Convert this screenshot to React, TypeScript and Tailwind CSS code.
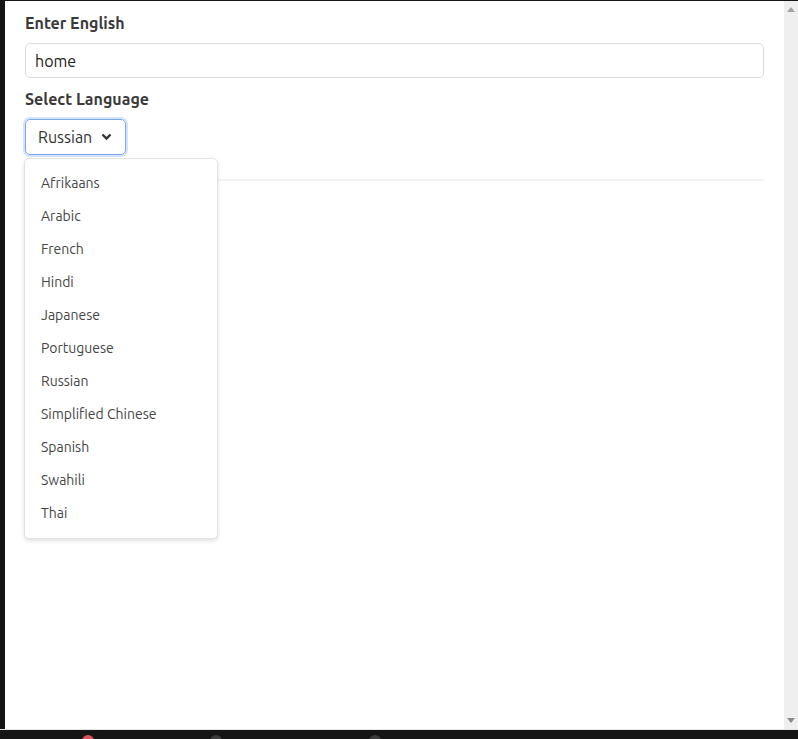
import { useState } from "react";

const languages = [
    "Afrikaans",
    "Arabic",
    "French",
    "Hindi",
    "Japanese",
    "Portuguese",
    "Russian",
    "Simplified Chinese",
    "Spanish",
    "Swahili",
    "Thai",
];

export default function App() {
    const [word, setWord] = useState("home");
    const [lang] = useState("Russian");

    return (
        <div
            className="w-[798px] h-[739px] bg-[#151515] flex flex-col overflow-hidden"
            style={{ fontFamily: "Ubuntu, 'Noto Sans', 'Open Sans', sans-serif" }}
        >
            <div className="flex flex-1 mt-px">
                <div className="w-[5px] shrink-0" />
                <main className="flex-1 bg-white pt-[10px] px-5 relative">
                    <label className="block text-base font-bold text-[#3a3a3a] leading-6 mb-[8px]">Enter English</label>
                    <input
                        value={word}
                        onChange={(e) => setWord(e.target.value)}
                        className="w-full h-[35px] border border-[#dcdcdc] rounded-[5px] px-[9px] text-base text-[#222] outline-none"
                    />
                    <label className="block text-base font-bold text-[#3a3a3a] leading-6 mt-[9px] mb-[8px]">Select Language</label>
                    <div className="relative">
                        <button className="h-9 w-[101px] flex items-center gap-[9px] pl-3 border border-[#7aa7f0] rounded-[5px] ring-2 ring-[#d4e3fc] text-base text-[#333]">
                            {lang}
                            <svg width="11" height="8" viewBox="0 0 11 8" className="text-[#333]">
                                <path d="M1.5 1.5 L5.5 5.5 L9.5 1.5" fill="none" stroke="currentColor" strokeWidth="2.4" />
                            </svg>
                        </button>
                        <hr className="mt-[24px] border-0 h-[2px] bg-[#f3f3f3]" />
                        <ul className="absolute left-[-1px] top-[39px] w-[194px] bg-white border border-[#e2e2e2] rounded-[5px] shadow-[0_2px_4px_rgba(0,0,0,0.12)] pt-[7px] pb-[9px]">
                            {languages.map((l) => (
                                <li key={l} className="h-[33px] flex items-center px-4 text-sm text-[#454545]">
                                    {l}
                                </li>
                            ))}
                        </ul>
                    </div>
                </main>
                <div className="w-[14px] shrink-0 bg-[#efefef] flex flex-col justify-between items-center py-[6px]">
                    <svg width="8" height="5" viewBox="0 0 8 5"><path d="M0 5 L4 0 L8 5 Z" fill="#a3a3a3" /></svg>
                    <svg width="8" height="5" viewBox="0 0 8 5"><path d="M0 0 L4 5 L8 0 Z" fill="#8a8a8a" /></svg>
                </div>
            </div>
            <div className="h-px bg-[#e5e5e5]" />
            <div className="h-[9px] shrink-0 relative overflow-hidden">
                <span className="absolute left-[82px] top-[5px] w-3 h-3 rounded-full bg-[#e0525a]" />
                <span className="absolute left-[210px] top-[5px] w-3 h-3 rounded-full bg-[#3c3c3c]" />
                <span className="absolute left-[369px] top-[5px] w-3 h-3 rounded-full bg-[#3c3c3c]" />
            </div>
        </div>
    );
}
